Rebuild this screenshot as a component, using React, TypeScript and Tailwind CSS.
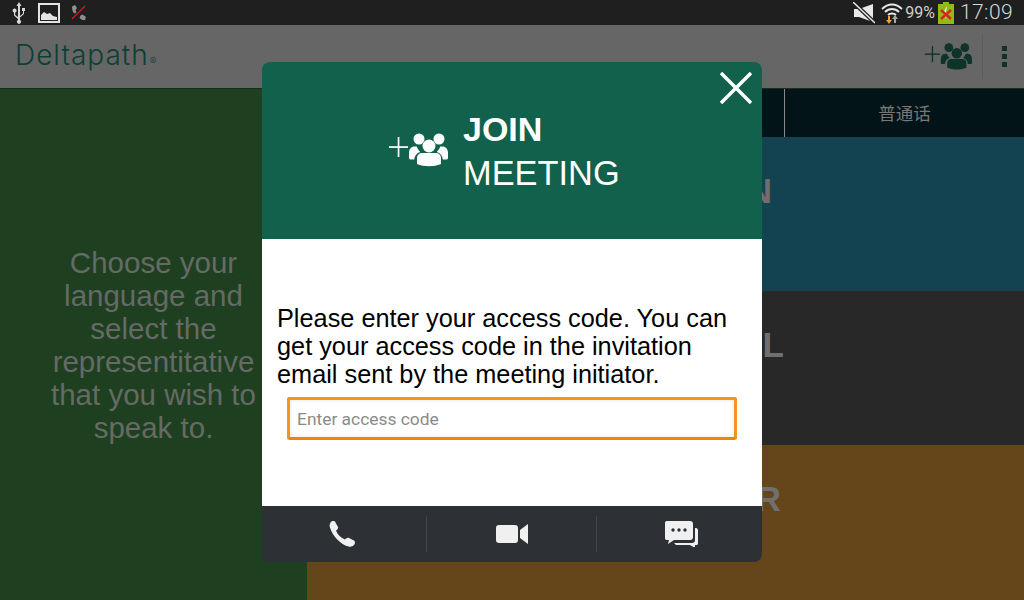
function PeopleIcon({ className }: { className: string }) {
  return (
    <svg viewBox="0 0 60 36" className={className} fill="currentColor">
      <rect x="1" y="14.200" width="19" height="1.700" />
      <rect x="9.700" y="5" width="1.700" height="20" />
      <circle cx="31" cy="7" r="5.500" />
      <circle cx="51" cy="7" r="5.500" />
      <path d="M22.500 27.500c-1 0-1.500-.8-1.500-1.700v-5c0-4 2.500-6.300 5.500-6.300h2.200c1 3 3 4.500 3.500 5.500-3.500 1-5.500 3.500-6 7.500zM58.500 27.500c1 0 1.500-.8 1.500-1.700v-5c0-4-2.500-6.300-5.500-6.300h-2.200c-1 3-3 4.500-3.500 5.500 3.500 1 5.500 3.500 6 7.500z" />
      <circle cx="41" cy="14" r="6.500" />
      <path d="M29 32v-6c0-3 2.500-5 5-5h14c2.500 0 5 2 5 5v6c-7 3-17 3-24 0z" />
    </svg>
  );
}

function Tile({ label, color, inset }: { label: string; color: string; inset: string }) {
  return (
    <div className={`h-[154px] flex items-start justify-end pt-[34px] text-[35px] leading-[40px] font-bold text-[#6f6f6f] ${color} ${inset}`}>
      {label}
    </div>
  );
}

export default function App() {
  return (
    <div className="relative w-[1024px] h-[600px] overflow-hidden bg-[#1f1f1f] font-['Liberation_Sans',sans-serif]">
      {/* status bar */}
      <div className="h-[25px] flex items-center justify-between bg-[#1f1f1f] pl-[12px] pr-[11px]">
        <div className="flex items-center gap-[12px] text-[#d8d8d8]">
          <svg viewBox="0 0 14 22" className="w-[14px] h-[22px]" fill="currentColor">
            <path d="M7 0l2.500 4H8v10l3-2.500V9H10V6h3v3h-1v3l-4 3.500V18a2 2 0 1 1-2 0v-1l-4-3.500V10.500a2 2 0 1 1 1.200 0V13l2.800 2V4H4.500z" />
          </svg>
          <svg viewBox="0 0 22 20" className="w-[22px] h-[20px]">
            <rect x="1" y="1" width="20" height="18" fill="#1f1f1f" stroke="#e4e4e4" strokeWidth="2" />
            <path d="M3 17v-5l3-3 3 2 3-1 3 3 4 1v3z" fill="#e4e4e4" />
          </svg>
          <svg viewBox="0 0 16 16" className="w-[16px] h-[16px] -ml-[1px]">
            <path d="M1 1.500l3-1.500 2 3-1.500 2.500 1 2-2 1C1.500 7 1 4 1 1.500zM9.500 10.500l2-1 3.500 2.500-1 3c-2 .5-4 -.5-5.500-2z" fill="#8f8f8f" />
            <path d="M1 14L14 1" stroke="#d9161c" strokeWidth="1.300" />
          </svg>
        </div>
        <div className="flex items-center text-[#d2d2d2]">
          <svg viewBox="0 0 22 22" className="w-[22px] h-[22px] mr-[6px]">
            <path d="M1 7h5l14-5v18L6 15H1z" fill="#e8e8e8" />
            <path d="M1 1l21 20" stroke="#1f1f1f" strokeWidth="4" />
            <path d="M0 0l22 21" stroke="#e8e8e8" strokeWidth="1.500" />
          </svg>
          <svg viewBox="0 0 22 22" className="w-[22px] h-[22px] mr-[2px]" fill="none">
            <path d="M1 7c6-6 14-6 20 0M4 10c4-4 10-4 14 0M7 13c2-2 6-2 8 0" stroke="#e8e8e8" strokeWidth="1.800" />
            <path d="M7 14h2v4h2l-3 4-3-4h2z" fill="#e8a33c" />
            <path d="M14 13l3 4h-2v4h-2v-4h-2z" fill="#a8a8a8" />
          </svg>
          <span className="text-[16px] font-['Roboto',sans-serif] mr-[3px] text-[#cfcfcf]">99%</span>
          <svg viewBox="0 0 16 22" className="w-[16px] h-[22px] mr-[6px]">
            <rect x="5" y="0" width="6" height="2" fill="#8fbb14" />
            <rect x="0" y="2" width="16" height="20" fill="#8fbb14" />
            <path d="M9 4L5 11h3l-1 6 4-7H8z" fill="#f0f0f0" />
            <path d="M3 8l10 9M13 8L3 17" stroke="#d8261c" strokeWidth="2.500" />
          </svg>
          <span className="text-[21px] font-['Roboto',sans-serif] font-light text-[#d8d8d8] tracking-[0.4px]">17:09</span>
        </div>
      </div>
      {/* action bar */}
      <div className="h-[64px] flex items-center justify-between bg-[#666666] border-b border-[#1a2e1c] pl-[15px]">
        <div className="flex items-baseline text-[#0e3f33] text-[28px] leading-none font-['Inter',sans-serif] font-light tracking-[1px] pb-[3px]">
          Deltapath
          <span className="text-[10px] ml-[1px]">®</span>
        </div>
        <div className="flex items-center h-full">
          <PeopleIcon className="w-[48px] h-[29px] text-[#0e3328] mt-[-1px]" />
          <div className="w-px h-[44px] bg-[#5c5c5c] ml-[10px]" />
          <div className="flex flex-col gap-[3px] pl-[19px] pr-[17px]">
            <div className="w-[5px] h-[5px] bg-[#0e3328]" />
            <div className="w-[5px] h-[5px] bg-[#0e3328]" />
            <div className="w-[5px] h-[5px] bg-[#0e3328]" />
          </div>
        </div>
      </div>
      {/* page behind the dialog */}
      <div className="h-[511px] flex">
        <div className="w-[307px] bg-[#1e4020] flex items-center justify-center">
          <p className="text-center text-[#666a66] text-[29.500px] leading-[33px] whitespace-nowrap">
            Choose your<br />language and<br />select the<br />representitative<br />that you wish to<br />speak to.
          </p>
        </div>
        <div className="flex-1 flex flex-col bg-[#65451a]">
          <div className="h-[48px] flex justify-end bg-[#021417]">
            <div className="w-[240px] border-l border-[#8a8a8a] flex items-center justify-center text-[#777777] text-[17.500px] font-['Noto_Sans_CJK_SC',sans-serif]">
              普通话
            </div>
          </div>
          <Tile label="N" color="bg-[#134350]" inset="pr-[252px]" />
          <Tile label="AL" color="bg-[#282828]" inset="pr-[240px]" />
          <Tile label="R" color="bg-[#65451a]" inset="pr-[243px]" />
        </div>
      </div>
      {/* dialog */}
      <div className="absolute left-[262px] top-[62px] w-[500px] h-[500px] rounded-[8px] overflow-hidden flex flex-col">
        <div className="relative h-[177px] bg-[#11614c] flex items-center text-white">
          <PeopleIcon className="absolute left-[126px] top-[70px] w-[60px] h-[36px]" />
          <div className="ml-[201px]">
            <div className="text-[34px] leading-[44px] font-bold">JOIN</div>
            <div className="text-[34.400px] leading-[44px]">MEETING</div>
          </div>
          <svg viewBox="0 0 34 34" className="absolute right-[9px] top-[9px] w-[34px] h-[34px]" stroke="white" strokeWidth="3.400">
            <path d="M2 2l30 30M32 2L2 32" />
          </svg>
        </div>
        <div className="flex-1 bg-white px-[15px] pt-[65px] text-black">
          <p className="text-[25.300px] leading-[28px]">
            Please enter your access code. You can get your access code in the invitation email sent by the meeting initiator.
          </p>
          <input
            placeholder="Enter access code"
            className="block w-[450px] h-[43px] ml-[10px] mt-[9px] px-[7px] border-[3px] border-[#f7931e] border-b-[#f5810f] rounded-[3px] text-[17.400px] font-['Roboto',sans-serif] placeholder:text-[#8a8a8a] outline-none shadow-[inset_0_0_4px_rgba(0,0,0,0.1)]"
          />
        </div>
        <div className="h-[56px] bg-[#2d3135] flex items-center">
          <div className="w-[165px] h-[36px] flex items-center justify-center pr-[4px] border-r border-[#41454a]">
            <svg viewBox="0 0 26 26" className="w-[26px] h-[26px]" fill="#f0f0f0">
              <path d="M2.500 .5C4-.3 6 0 6.500 1.500L9 6c.5 1.200-.5 2.500-2 3.500 1.500 4 5 7.500 9 9 1-1 2.500-2 4-1.500l5 2.500c1.500 1 1 3.500 0 4.500-1.500 1.500-3.500 2-5.500 1.500C11 23.500 3 14 .8 6 .3 4 1 1.800 2.500 .5z" />
            </svg>
          </div>
          <div className="w-[170px] h-[36px] flex items-center justify-center border-r border-[#41454a]">
            <svg viewBox="0 0 32 20" className="w-[32px] h-[20px]" fill="#f0f0f0">
              <path d="M3 1h16c2 0 3 1 3 3v12c0 2-1 3-3 3H3c-2 0-3-1-3-3V4c0-2 1-3 3-3zM32 0v20l-8-6V6z" />
            </svg>
          </div>
          <div className="flex-1 flex items-center justify-center pl-[4px]">
            <svg viewBox="0 0 33 26" className="w-[33px] h-[26px]">
              <path d="M2 0h23c2 0 3 1 3 3v13c0 2-1 3-3 3H9l-6 4 1-4H2c-2 0-2-1-2-3V3c0-2 0-3 2-3z" fill="#f0f0f0" />
              <circle cx="8" cy="9" r="1.700" fill="#2d3135" />
              <circle cx="14" cy="9" r="1.700" fill="#2d3135" />
              <circle cx="20" cy="9" r="1.700" fill="#2d3135" />
              <path d="M30 7h1c1 0 2 1 2 2v13c0 2-1 2-2 2h-1l0 3-5-3H11l-2-2h18c2 0 3-1 3-3z" fill="#f0f0f0" />
            </svg>
          </div>
        </div>
      </div>
    </div>
  );
}
